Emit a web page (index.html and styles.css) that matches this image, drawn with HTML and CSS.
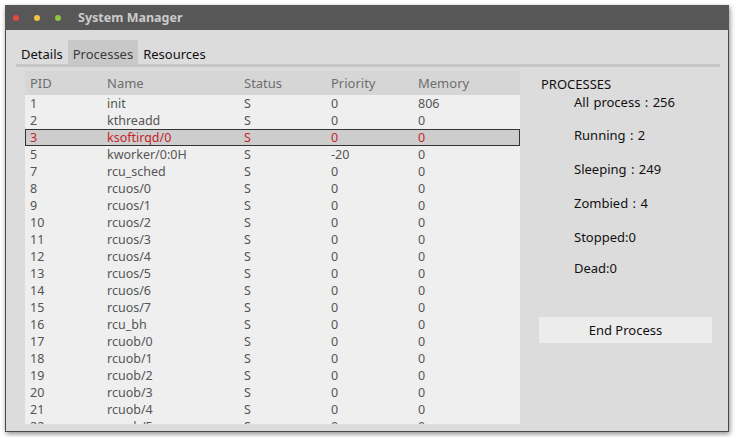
FILE: index.html
```html
<!DOCTYPE html>
<html>
<head>
<meta charset="utf-8">
<link rel="stylesheet" href="styles.css">
</head>
<body>
<div class="window">
  <div class="titlebar">
    <span class="dot red"></span><span class="dot yellow"></span><span class="dot green"></span>
    <span class="title">System Manager</span>
  </div>
  <div class="content">
    <div class="tabs">
      <div class="tab">Details</div>
      <div class="tab active">Processes</div>
      <div class="tab">Resources</div>
    </div>
    <div class="main">
      <div class="table">
        <div class="row head"><span>PID</span><span>Name</span><span>Status</span><span>Priority</span><span>Memory</span></div>
        <div class="row"><span>1</span><span>init</span><span>S</span><span>0</span><span>806</span></div>
        <div class="row"><span>2</span><span>kthreadd</span><span>S</span><span>0</span><span>0</span></div>
        <div class="row sel"><span>3</span><span>ksoftirqd/0</span><span>S</span><span>0</span><span>0</span></div>
        <div class="row"><span>5</span><span>kworker/0:0H</span><span>S</span><span>-20</span><span>0</span></div>
        <div class="row"><span>7</span><span>rcu_sched</span><span>S</span><span>0</span><span>0</span></div>
        <div class="row"><span>8</span><span>rcuos/0</span><span>S</span><span>0</span><span>0</span></div>
        <div class="row"><span>9</span><span>rcuos/1</span><span>S</span><span>0</span><span>0</span></div>
        <div class="row"><span>10</span><span>rcuos/2</span><span>S</span><span>0</span><span>0</span></div>
        <div class="row"><span>11</span><span>rcuos/3</span><span>S</span><span>0</span><span>0</span></div>
        <div class="row"><span>12</span><span>rcuos/4</span><span>S</span><span>0</span><span>0</span></div>
        <div class="row"><span>13</span><span>rcuos/5</span><span>S</span><span>0</span><span>0</span></div>
        <div class="row"><span>14</span><span>rcuos/6</span><span>S</span><span>0</span><span>0</span></div>
        <div class="row"><span>15</span><span>rcuos/7</span><span>S</span><span>0</span><span>0</span></div>
        <div class="row"><span>16</span><span>rcu_bh</span><span>S</span><span>0</span><span>0</span></div>
        <div class="row"><span>17</span><span>rcuob/0</span><span>S</span><span>0</span><span>0</span></div>
        <div class="row"><span>18</span><span>rcuob/1</span><span>S</span><span>0</span><span>0</span></div>
        <div class="row"><span>19</span><span>rcuob/2</span><span>S</span><span>0</span><span>0</span></div>
        <div class="row"><span>20</span><span>rcuob/3</span><span>S</span><span>0</span><span>0</span></div>
        <div class="row"><span>21</span><span>rcuob/4</span><span>S</span><span>0</span><span>0</span></div>
        <div class="row"><span>22</span><span>rcuob/5</span><span>S</span><span>0</span><span>0</span></div>
      </div>
      <div class="panel">
        <div class="ptitle">PROCESSES</div>
        <div class="stat s1">All process : 256</div>
        <div class="stat s2">Running : 2</div>
        <div class="stat">Sleeping : 249</div>
        <div class="stat">Zombied : 4</div>
        <div class="stat">Stopped:0</div>
        <div class="stat s6">Dead:0</div>
        <div class="btn">End Process</div>
      </div>
    </div>
  </div>
</div>
</body>
</html>
```
FILE: styles.css
```css
* { box-sizing: border-box; }
body {
  margin: 0;
  background: #ffffff;
  font-family: "Noto Sans", "Open Sans", sans-serif;
  font-size: 12.5px;
}
.window {
  margin: 5px;
  width: 724px;
  height: 427px;
  background: #dcdcdc;
  border: 1px solid #4a4a4a;
  border-top: none;
  box-shadow: 1px 2px 5px rgba(0,0,0,0.45);
  display: flex;
  flex-direction: column;
}
.titlebar {
  height: 25px;
  background: #575757;
  display: flex;
  align-items: center;
  padding-left: 8px;
  margin: 0 -1px;
}
.dot {
  width: 6px;
  height: 6px;
  border-radius: 50%;
  margin-right: 15px;
}
.red { background: #e4493f; }
.yellow { background: #f3c048; }
.green { background: #8ec63f; }
.title {
  color: #cbcbcb;
  font-weight: bold;
  font-size: 12.5px;
  margin-left: 2px;
}
.content {
  flex: 1;
  padding: 10px 8px 7px 10px;
  display: flex;
  flex-direction: column;
  min-height: 0;
}
.tabs {
  display: flex;
  height: 27px;
  border-bottom: 3px solid #c6c6c6;
  color: #111;
  font-size: 13px;
}
.tab {
  padding: 4px 5px 0;
  height: 24px;
  line-height: 20px;
}
.active {
  background: #c8c8c8;
  color: #3a3a3a;
}
.main {
  flex: 1;
  display: flex;
  min-height: 0;
  padding-top: 4px;
}
.table {
  margin-left: 9px;
  width: 495px;
  background: #efefef;
  overflow: hidden;
  color: #555555;
}
.row {
  display: grid;
  grid-template-columns: 77px 137px 87px 87px 1fr;
  height: 17px;
  line-height: 17px;
  padding-left: 5px;
}
.head {
  height: 24px;
  line-height: 24px;
  background: #d6d6d6;
  color: #6e6e6e;
  font-size: 13px;
}
.sel {
  background: #cdcdcd;
  outline: 1px solid #333333;
  outline-offset: -1px;
  color: #c5262a;
}
.panel {
  width: 200px;
  padding: 5px 0 0 21px;
  color: #111;
}
.ptitle {
  font-size: 13px;
  line-height: 16px;
}
.stat {
  margin-left: 33px;
  line-height: 16px;
  margin-top: 18px;
  font-size: 13px;
  word-spacing: 1px;
}
.stat.s1 { margin-top: 2px; }
.stat.s2 { margin-top: 17px; }
.stat.s6 { margin-top: 15px; }
.btn {
  margin: 41px 8px 0 -2px;
  height: 26px;
  line-height: 26px;
  background: #ececec;
  text-align: center;
  font-size: 13px;
}
```
